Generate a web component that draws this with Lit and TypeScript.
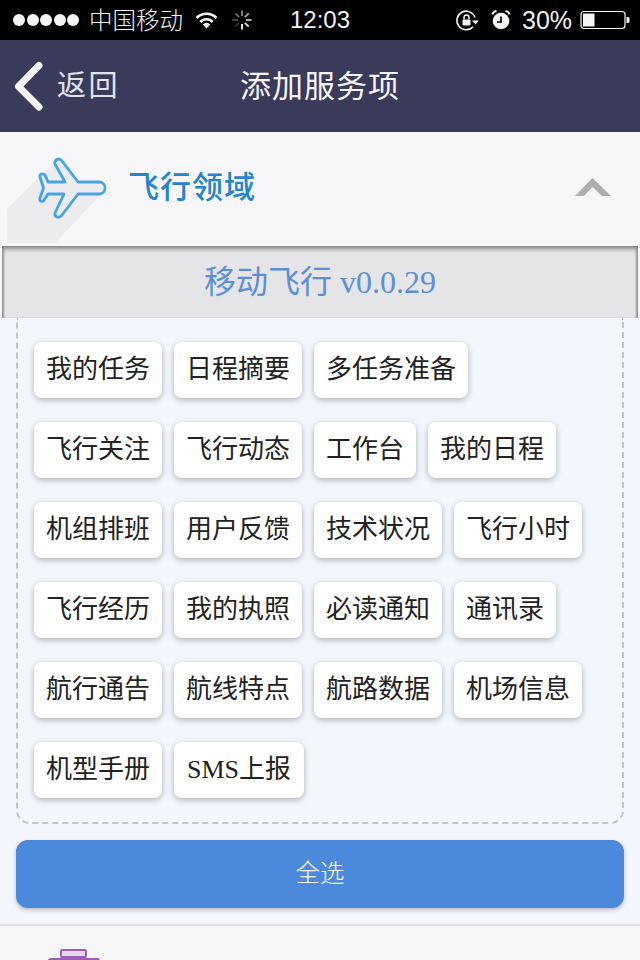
import { LitElement, html, svg, css } from 'lit';
import { customElement } from 'lit/decorators.js';

const SERVICES = [
  '我的任务', '日程摘要', '多任务准备',
  '飞行关注', '飞行动态', '工作台', '我的日程',
  '机组排班', '用户反馈', '技术状况', '飞行小时',
  '飞行经历', '我的执照', '必读通知', '通讯录',
  '航行通告', '航线特点', '航路数据', '机场信息',
  '机型手册', 'SMS上报',
];

const SPINNER_ANGLES = [0, 45, 90, 135, 180, 225, 270, 315];

// brightest spoke points down, the rest fade going round from there
const spokeOpacity = (angle: number): number =>
  1 - (((180 - angle + 360) % 360) / 45) * 0.115;

@customElement('app-root')
export class AppRoot extends LitElement {
  static styles = css`
    :host {
      display: block;
      width: 640px;
      height: 960px;
      overflow: hidden;
      background: #f7f6f8;
      font-family: 'Noto Sans CJK SC', sans-serif;
    }

    .status {
      height: 40px;
      background: #000;
      color: #f2f2f2;
      display: flex;
      align-items: center;
      padding-left: 13px;
      box-sizing: border-box;
    }
    .dots {
      display: flex;
      gap: 1.5px;
      width: 76px;
    }
    .dots i {
      width: 12px;
      height: 12px;
      border-radius: 50%;
      background: #f4f4f4;
    }
    .carrier {
      font-size: 23.5px;
      font-weight: 300;
      line-height: 38px;
      height: 40px;
      width: 106px;
      white-space: nowrap;
    }
    .wifi {
      width: 23px;
      height: 17px;
      margin-right: 3px;
    }
    .spinner {
      width: 20px;
      height: 20px;
      margin-left: 11px;
    }
    .time {
      font-family: 'Liberation Sans', sans-serif;
      font-size: 24px;
      margin-left: 38px;
      width: 165px;
      white-space: nowrap;
    }
    .rot {
      width: 24px;
      height: 22px;
    }
    .alarm {
      width: 20px;
      height: 22px;
      margin-left: 12px;
    }
    .pct {
      font-family: 'Liberation Sans', sans-serif;
      font-size: 25px;
      font-weight: 400;
      margin-left: 11px;
      width: 58px;
      white-space: nowrap;
    }
    .batt {
      width: 50px;
      height: 20px;
    }

    .nav {
      height: 92px;
      background: #3a3a5b;
      color: #f0f0f4;
      display: grid;
      grid-template-columns: 1fr auto 1fr;
      align-items: center;
    }
    .back {
      display: flex;
      align-items: center;
      padding-left: 14px;
      font-size: 29px;
      font-weight: 400;
      color: #e2e2ec;
      letter-spacing: 2.5px;
    }
    .back svg {
      width: 30px;
      height: 50px;
      margin-right: 13px;
    }
    .back span {
      padding-bottom: 6px;
    }
    .title {
      font-size: 31px;
      font-weight: 400;
      letter-spacing: 1px;
      color: #f6f6fa;
      padding-bottom: 6px;
    }

    .head {
      height: 113px;
      display: flex;
      align-items: center;
      padding-left: 6px;
      background: #f7f6f8;
    }
    .head .plane {
      width: 104px;
      height: 113px;
      display: block;
    }
    .head h2 {
      margin: 0 0 9px 18px;
      font-size: 31px;
      font-weight: 500;
      letter-spacing: 1px;
      color: #2484cc;
      flex: 1;
    }
    .head .caret {
      width: 36px;
      height: 20px;
      margin: 0 29px 4px 0;
    }

    .version {
      height: 72px;
      margin: 1px 2px 0;
      padding-bottom: 7px;
      box-sizing: border-box;
      background: #e5e5e7;
      box-shadow: inset 0 4px 4px -1px #858585, inset 3px 0 2px -1px #a0a0a0, inset -3px 0 2px -1px #a0a0a0;
      display: flex;
      align-items: center;
      justify-content: center;
      font-family: 'Liberation Serif', 'Noto Sans CJK SC', serif;
      font-size: 32px;
      color: #5b8fd6;
    }

    .panel {
      background: #f4f6fe;
      padding: 0 16px 16px;
      border-bottom: 2px solid #e2e2e6;
    }
    .box {
      display: flex;
      flex-wrap: wrap;
      align-content: flex-start;
      gap: 24px 12px;
      padding: 24px 16px 24px;
      border: 2px dashed #c4c4c8;
      border-top: none;
      border-radius: 0 0 14px 14px;
    }
    .chip {
      height: 56px;
      padding: 0 12px;
      box-sizing: border-box;
      background: #fff;
      border-radius: 8px;
      box-shadow: 0 2px 6px rgba(0, 0, 0, 0.28);
      font-family: 'Liberation Serif', 'Noto Sans CJK SC', serif;
      font-size: 26px;
      line-height: 56px;
      color: #222;
      white-space: nowrap;
    }
    .chip:last-child {
      padding: 0 13px;
    }
    .all {
      margin-top: 16px;
      height: 68px;
      padding-bottom: 6px;
      box-sizing: border-box;
      border-radius: 12px;
      background: #4a89dc;
      box-shadow: 0 2px 4px rgba(0, 0, 0, 0.25);
      color: #fff;
      font-size: 24.5px;
      font-weight: 300;
      display: flex;
      align-items: center;
      justify-content: center;
    }

    .next {
      padding: 22px 0 0 46px;
    }
    .next svg {
      width: 56px;
      height: 40px;
      display: block;
    }
  `;

  render(): unknown {
    return html`
      <div class="status">
        <div class="dots">${[0, 1, 2, 3, 4].map(() => html`<i></i>`)}</div>
        <span class="carrier">中国移动</span>
        <svg class="wifi" viewBox="0 0 23 17" fill="none" stroke="#f4f4f4" stroke-width="2.6">
          <path d="M1.5 6a14 14 0 0 1 20 0" />
          <path d="M5.300 10a8.500 8.500 0 0 1 12.400 0" />
          <path d="M11.500 16.500l-3.700-4a5 5 0 0 1 7.400 0z" fill="#f4f4f4" stroke="none" />
        </svg>
        <svg class="spinner" viewBox="0 0 20 20" stroke-width="1.800">
          ${SPINNER_ANGLES.map(
            (a) => svg`<line
              x1="10"
              y1="0.5"
              x2="10"
              y2="6"
              stroke="#fff"
              stroke-opacity=${spokeOpacity(a)}
              transform="rotate(${a} 10 10)"
            />`
          )}
        </svg>
        <span class="time">12:03</span>
        <svg class="rot" viewBox="0 0 24 22" fill="none" stroke="#f4f4f4" stroke-width="1.500">
          <path d="M20 8.500A9.300 9.300 0 1 0 18 17.800" />
          <path d="M17 11.500h7l-3.500 4z" fill="#f4f4f4" stroke="none" />
          <rect x="7.500" y="10.500" width="8" height="6" rx="1" fill="#f4f4f4" stroke="none" />
          <path d="M9 10.500V8.500a2.500 2.500 0 0 1 5 0v2" />
        </svg>
        <svg class="alarm" viewBox="0 0 20 22">
          <circle cx="10" cy="12" r="8.300" fill="#f4f4f4" />
          <path d="M10 7.500v5.500H6" fill="none" stroke="#000" stroke-width="1.700" />
          <path d="M1.500 5.500Q2 2.500 5.500 2M18.500 5.500Q18 2.500 14.500 2" fill="none" stroke="#f4f4f4" stroke-width="2" />
        </svg>
        <span class="pct">30%</span>
        <svg class="batt" viewBox="0 0 50 20">
          <rect x="1" y="1.500" width="44" height="17" rx="3" fill="none" stroke="#f4f4f4" stroke-width="1.200" />
          <rect x="3" y="3.500" width="11.500" height="13" fill="#f4f4f4" />
          <path d="M46.500 7h1.500a1.500 1.500 0 0 1 1.500 1.500v3a1.500 1.500 0 0 1-1.500 1.500h-1.500z" fill="#f4f4f4" />
        </svg>
      </div>

      <div class="nav">
        <div class="back">
          <svg viewBox="0 0 30 50" fill="none" stroke="#f6f6fa" stroke-width="7" stroke-linecap="round" stroke-linejoin="round">
            <path d="M25 4.500L4.500 25.500L25 46" />
          </svg>
          <span>返回</span>
        </div>
        <div class="title">添加服务项</div>
        <div></div>
      </div>

      <div class="head">
        <svg class="plane" viewBox="6 132 104 113">
          <path d="M7 209L41 175L57 160L62 161L78 182H99L104 191L55 243H7z" fill="#ecebee" />
          <path
            d="M55 164C54 160 59 157 62 161L78 182H99C103 182 105 185 105 188C105 191 103 194 99 194H78L62 215C59 219 54 217 55 213L64 194H48L44 200C43 202 39 202 40 198L43.500 188L40 177C39 174 43 173 45 175L48 182H65z"
            fill="none"
            stroke="#45a3e8"
            stroke-width="2.800"
            stroke-linejoin="round"
          />
        </svg>
        <h2>飞行领域</h2>
        <svg class="caret" viewBox="0 0 36 20">
          <path d="M0 19L17.500 1L36 19H27L17.500 10L9 19z" fill="#aeaeb0" />
        </svg>
      </div>

      <div class="version">移动飞行 v0.0.29</div>

      <div class="panel">
        <div class="box">
          ${SERVICES.map((name) => html`<div class="chip">${name}</div>`)}
        </div>
        <div class="all">全选</div>
      </div>

      <div class="next">
        <svg viewBox="0 0 56 40" fill="none" stroke="#9a5fb5" stroke-width="2">
          <rect x="15" y="2" width="25" height="7" rx="1.500" fill="#e6d8ee" />
          <rect x="3" y="11" width="50" height="26" rx="2" />
        </svg>
      </div>
    `;
  }
}

declare global {
  interface HTMLElementTagNameMap {
    'app-root': AppRoot;
  }
}
